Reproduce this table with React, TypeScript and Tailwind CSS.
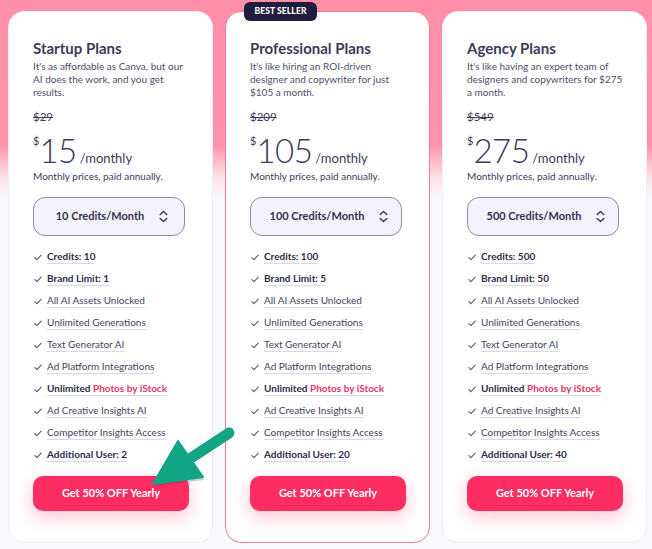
import React from "react";

type Feature = { label: React.ReactNode; bold?: boolean };

const Check = () => (
  <svg width="8" height="7" viewBox="0 0 8 7" className="shrink-0">
    <path d="M0.8 3.6 L3 5.7 L7.2 1.2" fill="none" stroke="#5b5976" strokeWidth="1.1" strokeLinecap="round" strokeLinejoin="round" />
  </svg>
);

const UpDown = () => (
  <svg width="9" height="13" viewBox="0 0 9 13" className="shrink-0">
    <path d="M1.2 4.6 L4.5 1.4 L7.8 4.6 M1.2 8.4 L4.5 11.6 L7.8 8.4" fill="none" stroke="#3a3854" strokeWidth="1.4" strokeLinecap="round" strokeLinejoin="round" />
  </svg>
);

function Plan({
  title,
  desc,
  old,
  price,
  credits,
  features,
  featured,
}: {
  title: string;
  desc: string[];
  old: string;
  price: string;
  credits: string;
  features: Feature[];
  featured?: boolean;
}) {
  return (
    <div
      className={
        "relative flex h-[532px] w-[205px] flex-col rounded-[16px] bg-white pl-[24px] pr-[14px] pt-[27px] " +
        (featured ? "border-[1.5px] border-[#f3799a]" : "border border-[#efedf6]")
      }
    >
      {featured && (
        <div className="absolute left-[18px] top-[-10px] flex h-[19px] w-[73px] items-center justify-center rounded-[6px] bg-[#1f1c3d] text-[8.5px] font-black tracking-[0.1px] text-white">
          BEST SELLER
        </div>
      )}
      <div className="text-[15px] font-bold leading-[18px] text-[#3d3a5c]">{title}</div>
      <div className="mt-[3px] whitespace-nowrap text-[10px] leading-[13px] text-[#4f4d69]">
        {desc.map((l, i) => (
          <div key={i}>{l}</div>
        ))}
      </div>
      <div className="mt-[11px] text-[11.5px] leading-[14px] text-[#3d3a5c] line-through">{old}</div>
      <div className="mt-[10px] flex items-baseline text-[#3d3a5c]">
        <span className="self-start text-[11px] leading-[14px]">$</span>
        <span className="text-[33px] font-light leading-[32px] tracking-[-0.5px]">{price}</span>
        <span className="ml-[3px] text-[13px] leading-[16px]">/monthly</span>
      </div>
      <div className="mt-[4px] text-[10px] leading-[13px] text-[#3d3a5c]">Monthly prices, paid annually.</div>
      <div className="mt-[14px] flex h-[39px] w-[152px] items-center justify-center gap-[15px] rounded-[12px] border-[1.5px] border-[#8e8ba6] bg-[#f4f3fd] pl-[6px]">
        <span className="text-[11px] font-bold text-[#33314f]">{credits}</span>
        <UpDown />
      </div>
      <div className="mt-[10px] flex flex-col">
        {features.map((f, i) => (
          <div key={i} className="flex h-[22px] items-center gap-[5px] pl-[1px]">
            <Check />
            <span
              className={
                "border-b-[1.5px] border-[#d9d7e8] pb-[1px] text-[10px] leading-[12px] " +
                (f.bold ? "font-bold text-[#2f2c4c]" : "text-[#45435f]")
              }
            >
              {f.label}
            </span>
          </div>
        ))}
      </div>
      <button className="mt-[10px] flex h-[35px] w-[156px] items-center justify-center rounded-[10px] bg-[#fd2c61] text-[11px] font-bold text-white shadow-[0_6px_18px_rgba(253,44,97,0.28)]">
        Get 50% OFF Yearly
      </button>
    </div>
  );
}

function feats(credits: string, brand: string, users: string): Feature[] {
  return [
    { label: `Credits: ${credits}`, bold: true },
    { label: `Brand Limit: ${brand}`, bold: true },
    { label: "All AI Assets Unlocked" },
    { label: "Unlimited Generations" },
    { label: "Text Generator AI" },
    { label: "Ad Platform Integrations" },
    {
      label: (
        <>
          Unlimited <span className="text-[#e63569]">Photos by iStock</span>
        </>
      ),
      bold: true,
    },
    { label: "Ad Creative Insights AI" },
    { label: "Competitor Insights Access" },
    { label: `Additional User: ${users}`, bold: true },
  ];
}

export default function App() {
  return (
    <div
      className="relative h-[549px] w-[652px] overflow-hidden bg-[linear-gradient(180deg,#fe8fa7_0px,#fe93aa_145px,#fde3ea_178px,#f9f8fd_200px,#f9f8fd_549px)]"
      style={{ fontFamily: "Lato, 'Noto Sans', sans-serif" }}
    >
      <div className="flex gap-[12px] pl-[8px] pt-[11px]">
        <Plan
          title="Startup Plans"
          desc={["It's as affordable as Canva, but our", "AI does the work, and you get", "results."]}
          old="$29"
          price="15"
          credits="10 Credits/Month"
          features={feats("10", "1", "2")}
        />
        <Plan
          featured
          title="Professional Plans"
          desc={["It's like hiring an ROI-driven", "designer and copywriter for just", "$105 a month."]}
          old="$209"
          price="105"
          credits="100 Credits/Month"
          features={feats("100", "5", "20")}
        />
        <Plan
          title="Agency Plans"
          desc={["It's like having an expert team of", "designers and copywriters for $275", "a month."]}
          old="$549"
          price="275"
          credits="500 Credits/Month"
          features={feats("500", "50", "40")}
        />
      </div>
      <svg className="pointer-events-none absolute left-0 top-0" width="652" height="549" viewBox="0 0 652 549">
        <path d="M154 484 L203 478 L178 442 Z" fill="#3a3a3a" opacity="0.25" transform="translate(1,2)" />
        <line x1="229" y1="433" x2="188" y2="460" stroke="#12a585" strokeWidth="11" strokeLinecap="round" />
        <path d="M153 484 L178 441 L203 477 Z" fill="#12a585" stroke="#12a585" strokeWidth="2" strokeLinejoin="round" />
      </svg>
    </div>
  );
}
